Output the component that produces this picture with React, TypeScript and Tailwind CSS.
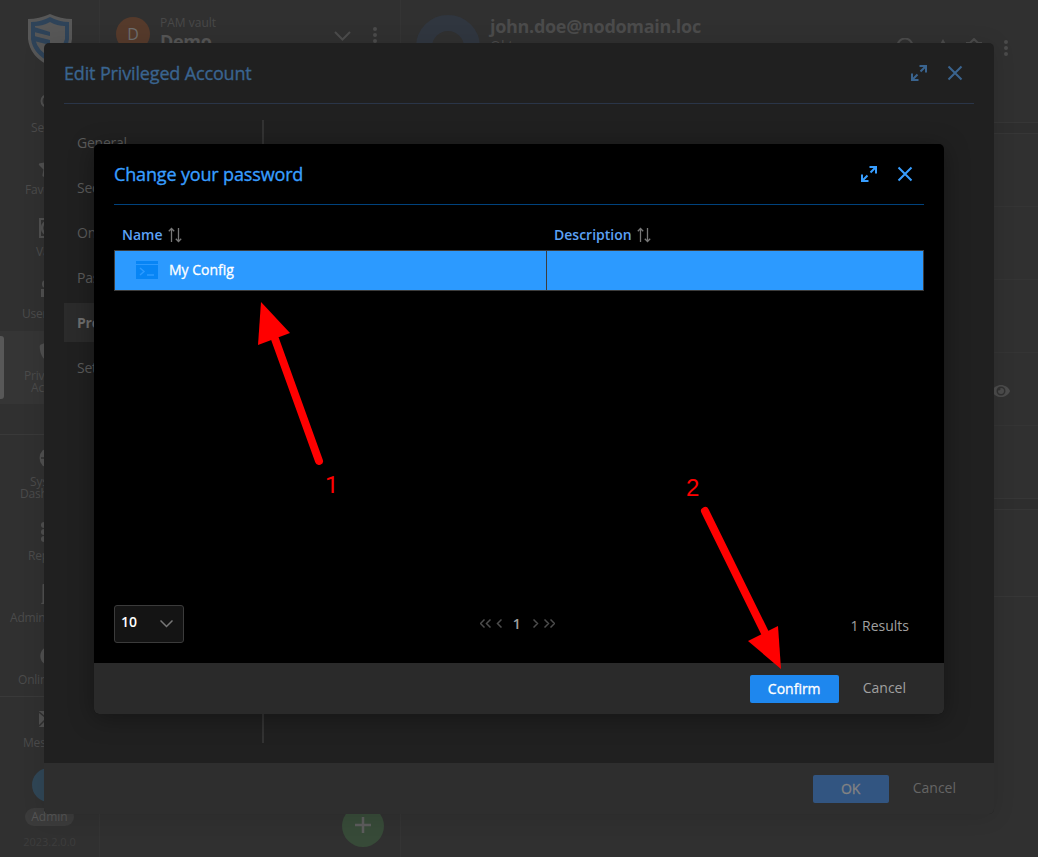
import type { ReactNode } from "react";
import { FaStar, FaShieldAlt, FaBuilding, FaCircle, FaEye } from "react-icons/fa";

type NavItem = { lines: string[]; pads: string[]; icon: ReactNode; active?: boolean };

const topItems: NavItem[] = [
  { lines: ["Search"], pads: ["pl-[31px]"], icon: <svg width="20" height="20" viewBox="0 0 20 20" fill="none" stroke="currentColor" strokeWidth="2"><circle cx="7.500" cy="7" r="6" /><path d="m12 12 5 5" /></svg> },
  { lines: ["Favorites"], pads: ["pl-[25px]"], icon: <FaStar size={23} /> },
  { lines: ["Vaults"], pads: ["pl-[36px]"], icon: <svg width="24" height="20" viewBox="0 0 24 20" fill="none" stroke="currentColor" strokeWidth="2"><path d="M2 1h20v18H2z" strokeWidth="2" /><circle cx="11" cy="10" r="7" strokeWidth="2.500" /><circle cx="11" cy="10" r="3" /></svg> },
  { lines: ["User Vaults"], pads: ["pl-[22px]"], icon: <svg width="20" height="20" viewBox="0 0 20 20" fill="currentColor"><circle cx="6" cy="4" r="4" /><path d="M1 9h10v8H1z" /><circle cx="14" cy="4" r="4" /><path d="M13 9h6v8h-6zM4 17h12v3H4z" /></svg> },
  { lines: ["Privileged", "Accounts"], pads: ["pl-[24px]", "pl-[31px]"], icon: <FaShieldAlt size={22} />, active: true },
];

const adminItems: NavItem[] = [
  { lines: ["System", "Dashboard"], pads: ["pl-[30px]", "pl-[20px]"], icon: <svg width="22" height="22" viewBox="0 0 22 22"><circle cx="11" cy="11" r="10.500" fill="currentColor" /><path d="M2 11h10M6 4l5 7" stroke="#303030" strokeWidth="1.500" /></svg> },
  { lines: ["Reports"], pads: ["pl-[28px]"], icon: <svg width="18" height="20" viewBox="0 0 18 20" fill="currentColor"><rect width="18" height="6" rx="3" /><rect y="7" width="18" height="6" rx="3" /><rect y="14" width="18" height="6" rx="3" /></svg> },
  { lines: ["Administration"], pads: ["pl-[10px]"], icon: <FaBuilding size={20} /> },
  { lines: ["Online Users"], pads: ["pl-[18px]"], icon: <FaCircle size={20} /> },
];

function SideItem({ item }: { item: NavItem }) {
  return (
    <div className={`relative mb-px w-full shrink-0 pt-[11px] pb-[10px] ${item.active ? "bg-[#353535]" : ""}`}>
      {item.active && <span className="absolute top-[5px] left-0 h-[63px] w-1 rounded-r-[3px] bg-[#585858]" />}
      <div className="mb-[8px] flex h-5 items-center justify-center text-[#505050]">{item.icon}</div>
      {item.lines.map((line, i) => (
        <div key={line} className={`h-3 text-[12px] leading-[12px] tracking-[-0.2px] whitespace-nowrap ${item.pads[i]}`}>{line}</div>
      ))}
    </div>
  );
}

function Expand() {
  return (
    <svg width="18" height="18" viewBox="0 0 18 18" fill="none" stroke="currentColor" strokeWidth="2">
      <path d="M9.500 2H16v6.500M16 2l-5.500 5.500M2 9.500V16h6.500M2 16l5.500-5.500" />
    </svg>
  );
}

function Cross() {
  return (
    <svg width="16" height="16" viewBox="0 0 16 16" fill="none" stroke="currentColor" strokeWidth="2">
      <path d="m1.500 1.500 13 13M14.500 1.500l-13 13" />
    </svg>
  );
}

function SortArrows() {
  return (
    <svg className="mt-[2px] ml-[5px]" width="15" height="16" viewBox="0 0 15 16" fill="none" stroke="#777" strokeWidth="1.300">
      <path d="M3.500 15V2M.8 4.200l2.700-2.700 2.700 2.700M10.500 1v13M7.800 11.800l2.700 2.700 2.700-2.700" />
    </svg>
  );
}

function Dots() {
  return (
    <svg width="4" height="16" viewBox="0 0 4 16" fill="currentColor">
      <circle cx="2" cy="2" r="2" /><circle cx="2" cy="8" r="2" /><circle cx="2" cy="14" r="2" />
    </svg>
  );
}

function DialogHeader({ title, className }: { title: string; className: string }) {
  return (
    <div className={`mx-5 flex h-[61px] shrink-0 items-center border-b ${className}`}>
      <h2 className="flex-1 text-[18px] tracking-[-0.15px] [-webkit-text-stroke:0.35px_currentColor]">{title}</h2>
      <div className="mr-[11px] flex items-center gap-[19px]">
        <Expand />
        <Cross />
      </div>
    </div>
  );
}

const dialogNav = ["General", "Security", "Online", "Password", "Programs", "Settings"];

function Background() {
  return (
    <div className="flex h-full text-[#4b4b4b]">
      <aside className="flex w-[100px] shrink-0 flex-col border-r border-[#343434]">
        <div className="flex h-[83px] shrink-0 justify-center pt-[14px]">
          <svg width="46" height="52" viewBox="0 0 46 52">
            <path d="M23 0 Q34 5 45 5 V25 Q43 43 23 52 Q3 43 1 25 V5 Q12 5 23 0Z" fill="#575757" />
            <path d="M23 3 Q32 8 42 8 V25 Q40 40 23 48 Q6 40 4 25 V8 Q14 8 23 3Z" fill="#2e4359" />
            <path d="M23 8 Q30 12 38 12 V25 Q35 37 23 43 Q11 37 8 25 V12 Q16 12 23 8Z" fill="#575757" />
            <path d="M7 13l16 5v4L7 18zM7 22l16 4v5L7 27z" fill="#2e4359" />
          </svg>
        </div>
        {topItems.map((item) => <SideItem key={item.lines[0]} item={item} />)}
        <div className="mt-[29px] mb-[2px] h-px shrink-0 bg-[#393939]" />
        {adminItems.map((item) => <SideItem key={item.lines[0]} item={item} />)}
        <div className="-mt-px mb-px h-px shrink-0 bg-[#393939]" />
        <SideItem item={{ lines: ["Messages"], pads: ["pl-[23px]"], icon: <svg width="22" height="16" viewBox="0 0 22 16"><path d="M0 0h22v16H0z" fill="currentColor" /><path d="m0 1 11 9L22 1M0 15l7-7M22 15l-7-7" fill="none" stroke="#303030" strokeWidth="1.500" /></svg> }} />
        <div className="mt-[8px] h-[34px] w-[34px] shrink-0 -translate-x-px self-center rounded-full bg-[#304656]" />
        <div className="mt-[6px] h-[18px] w-[49px] shrink-0 self-center rounded-full bg-[#3b3b3b] text-center text-[12px] leading-[17px] text-[#555]">Admin</div>
        <div className="mt-[8px] text-center text-[11px] leading-4 text-[#3d3d3d]">2023.2.0.0</div>
      </aside>
      <section className="flex w-[301px] shrink-0 flex-col justify-between border-r border-[#343434]">
        <header className="flex pt-[14px] pl-4">
          <div className="mt-[3px] flex h-[34px] w-[34px] items-center justify-center rounded-full bg-[#553a2b] pb-px text-[16px] text-[#6d6d6d]">D</div>
          <div className="ml-[10px] w-[174px]">
            <div className="text-[12px] leading-[17px] text-[#484848]">PAM vault</div>
            <div className="text-[18px] leading-5 font-bold tracking-[-0.3px] text-[#555]">Demo</div>
          </div>
          <svg className="mt-[17px]" width="17" height="10" viewBox="0 0 17 10" fill="none" stroke="#4c4c4c" strokeWidth="2"><path d="m1 1 7.500 7.500L16 1" /></svg>
          <div className="mt-[13px] ml-[22px]"><Dots /></div>
        </header>
        <div className="mr-4 mb-[10px] flex h-[42px] w-[42px] items-center justify-center self-end rounded-full bg-[#374a38]">
          <svg className="-mt-[3px]" width="18" height="18" viewBox="0 0 18 18" stroke="#5c5c5c" strokeWidth="2.500"><path d="M9 1v16M1 9h16" /></svg>
        </div>
      </section>
      <main className="flex min-w-0 flex-1 flex-col">
        <header className="flex h-[122px] shrink-0 pt-[15px] pl-[15px]">
          <div className="h-16 w-16 rounded-full border-[16px] border-[#30363f]" />
          <div className="ml-[10px] flex-1">
            <div className="text-[18px] leading-[23px] font-bold tracking-[-0.3px]">john.doe@nodomain.loc</div>
            <div className="-mt-px text-[14px] leading-[18px]">Okta</div>
          </div>
          <div className="mt-[23px] mr-[30px] flex items-start">
            <svg width="90" height="16" viewBox="0 0 90 16" fill="none" stroke="currentColor" strokeWidth="2">
              <circle cx="8" cy="8" r="7.500" /><path d="m46 3-5 9h10z" fill="currentColor" /><path d="M69 5h4l4-4 4 4h4" />
            </svg>
            <div className="ml-[17px] pt-[2px]"><Dots /></div>
          </div>
        </header>
        <div className="h-[12px] border-y border-[#363636] bg-[#2e2e2e]" />
        {[0, 1, 2, 3, 4].map((row) => (
          <div key={row} className={`flex items-center justify-end pr-[28px] ${row === 4 ? "h-[72px]" : "h-[73px] border-b border-[#343434]"}`}>
            {row === 3 && <FaEye className="mt-[3px]" size={18} />}
          </div>
        ))}
        <div className="h-[12px] border-y border-[#363636] bg-[#2e2e2e]" />
        <div className="h-[87px] border-b border-[#363636]" />
      </main>
    </div>
  );
}

function AccountDialog() {
  return (
    <div className="absolute top-[43px] left-[44px] flex h-[771px] w-[950px] flex-col overflow-hidden rounded-[5px] bg-[#202020] text-[14px] text-[#5b5b5b]">
      <DialogHeader title="Edit Privileged Account" className="border-[#2a3548] text-[#3a648f]" />
      <div className="flex flex-1 pt-4 pb-5 pl-5">
        <nav className="flex w-[200px] flex-col gap-[6px] border-r-2 border-[#333] pt-[3px]">
          {dialogNav.map((label) => (
            <div key={label} className={`h-[39px] pl-[13px] leading-[39px] tracking-[-0.25px] ${label === "Programs" ? "bg-[#2b2b2b] font-bold text-[#6f6f6f]" : ""}`}>{label}</div>
          ))}
        </nav>
      </div>
      <footer className="flex h-[51px] items-center justify-end bg-[#2e2e2e] pr-[38px]">
        <button className="h-7 w-[76px] rounded-[2px] bg-[#325581] text-[#838383] [-webkit-text-stroke:0.3px_currentColor]">OK</button>
        <button className="ml-6 -mt-[3px] text-[#656565]">Cancel</button>
      </footer>
    </div>
  );
}

function PasswordDialog() {
  return (
    <div className="absolute top-[144px] left-[94px] flex h-[570px] w-[850px] flex-col overflow-hidden rounded-[5px] bg-black text-[14px] text-[#a0a0a0] shadow-[0_4px_24px_rgba(0,0,0,0.35)]">
      <DialogHeader title="Change your password" className="border-[#00427d] text-[#389eff]" />
      <div className="mx-5 flex flex-1 flex-col pt-[14px]">
        <div className="mb-px grid h-[30px] grid-cols-[432px_1fr] items-center font-semibold text-[#5ca2f6]">
          <div className="flex items-center pl-[8px]">Name<SortArrows /></div>
          <div className="flex items-center pl-[8px]">Description<SortArrows /></div>
        </div>
        <div className="grid h-[41px] grid-cols-[432px_1fr] border border-[#3d3d3d] bg-[#2c9aff] text-white">
          <div className="flex items-center border-r border-[#3d3d3d] pl-[21px]">
            <svg className="-mt-px" width="22" height="18" viewBox="0 0 22 18"><path d="M0 0h22v3H0zM0 4h22v14H0z" fill="#0785f5" /><path d="m4 7 4 3.500L4 14M11 14h7" fill="none" stroke="#2c9aff" strokeWidth="1.500" /></svg>
            <span className="-mt-[2px] ml-[11px] [-webkit-text-stroke:0.3px_currentColor]">My Config</span>
          </div>
          <div />
        </div>
        <div className="mt-auto mb-5 flex h-[38px] items-center justify-between">
          <div className="flex h-[38px] w-[70px] items-center justify-between rounded-[3px] border border-[#3b3b3b] bg-[#141414] pr-[10px] pl-[6px] font-semibold text-white">
            <span className="-mt-[5px]">10</span>
            <svg width="13" height="8" viewBox="0 0 13 8" fill="none" stroke="#777" strokeWidth="1.500"><path d="m.5.5 6 6 6-6" /></svg>
          </div>
          <div className="-mt-[2px] flex items-center">
            <svg width="22" height="9" viewBox="0 0 22 9" fill="none" stroke="#4c4c4c" strokeWidth="1.500"><path d="m4.500.5-4 4 4 4M10.500.5l-4 4 4 4M21.500.5l-4 4 4 4" /></svg>
            <span className="mx-[11px] font-semibold">1</span>
            <svg className="ml-[1px]" width="22" height="9" viewBox="0 0 22 9" fill="none" stroke="#4c4c4c" strokeWidth="1.500"><path d="m.5.500 4 4-4 4M11.500.5l4 4-4 4M17.500.5l4 4-4 4" /></svg>
          </div>
          <div className="mt-[2px] mr-[15px]">1 Results</div>
        </div>
      </div>
      <footer className="flex h-[51px] items-center justify-end bg-[#2a2a2a] pr-[38px]">
        <button className="h-7 w-[89px] rounded-[2px] bg-[#1e87ee] text-white [-webkit-text-stroke:0.3px_currentColor]">Confirm</button>
        <button className="ml-6 -mt-[3px]">Cancel</button>
      </footer>
    </div>
  );
}

function Annotations() {
  return (
    <>
      <svg className="absolute top-[300px] left-[256px]" width="68" height="168" viewBox="256 300 68 168">
        <path d="m275 339 44 122" stroke="red" strokeWidth="8" strokeLinecap="round" />
        <path d="m261 302 29 31-32 12z" fill="red" />
      </svg>
      <svg className="absolute top-[505px] left-[698px]" width="86" height="166" viewBox="698 505 86 166">
        <path d="m705 511 60 122" stroke="red" strokeWidth="8" strokeLinecap="round" />
        <path d="m781 669-33-28 30-15z" fill="red" />
      </svg>
      <span className="absolute top-[472px] left-[325px] font-['Roboto',sans-serif] text-[24px] leading-[26px] text-[#ff0000]">1</span>
      <span className="absolute top-[475px] left-[686px] font-['Liberation_Sans',sans-serif] text-[24px] leading-[26px] text-[#ff0000]">2</span>
    </>
  );
}

export default function App() {
  return (
    <div className="relative h-[857px] w-[1038px] overflow-hidden bg-[#303030] font-['Open_Sans',sans-serif]">
      <Background />
      <div className="absolute top-[43px] left-[44px] h-[771px] w-[950px] rounded-[5px] shadow-[0_2px_22px_rgba(0,0,0,0.12)]" />
      <AccountDialog />
      <PasswordDialog />
      <Annotations />
    </div>
  );
}
